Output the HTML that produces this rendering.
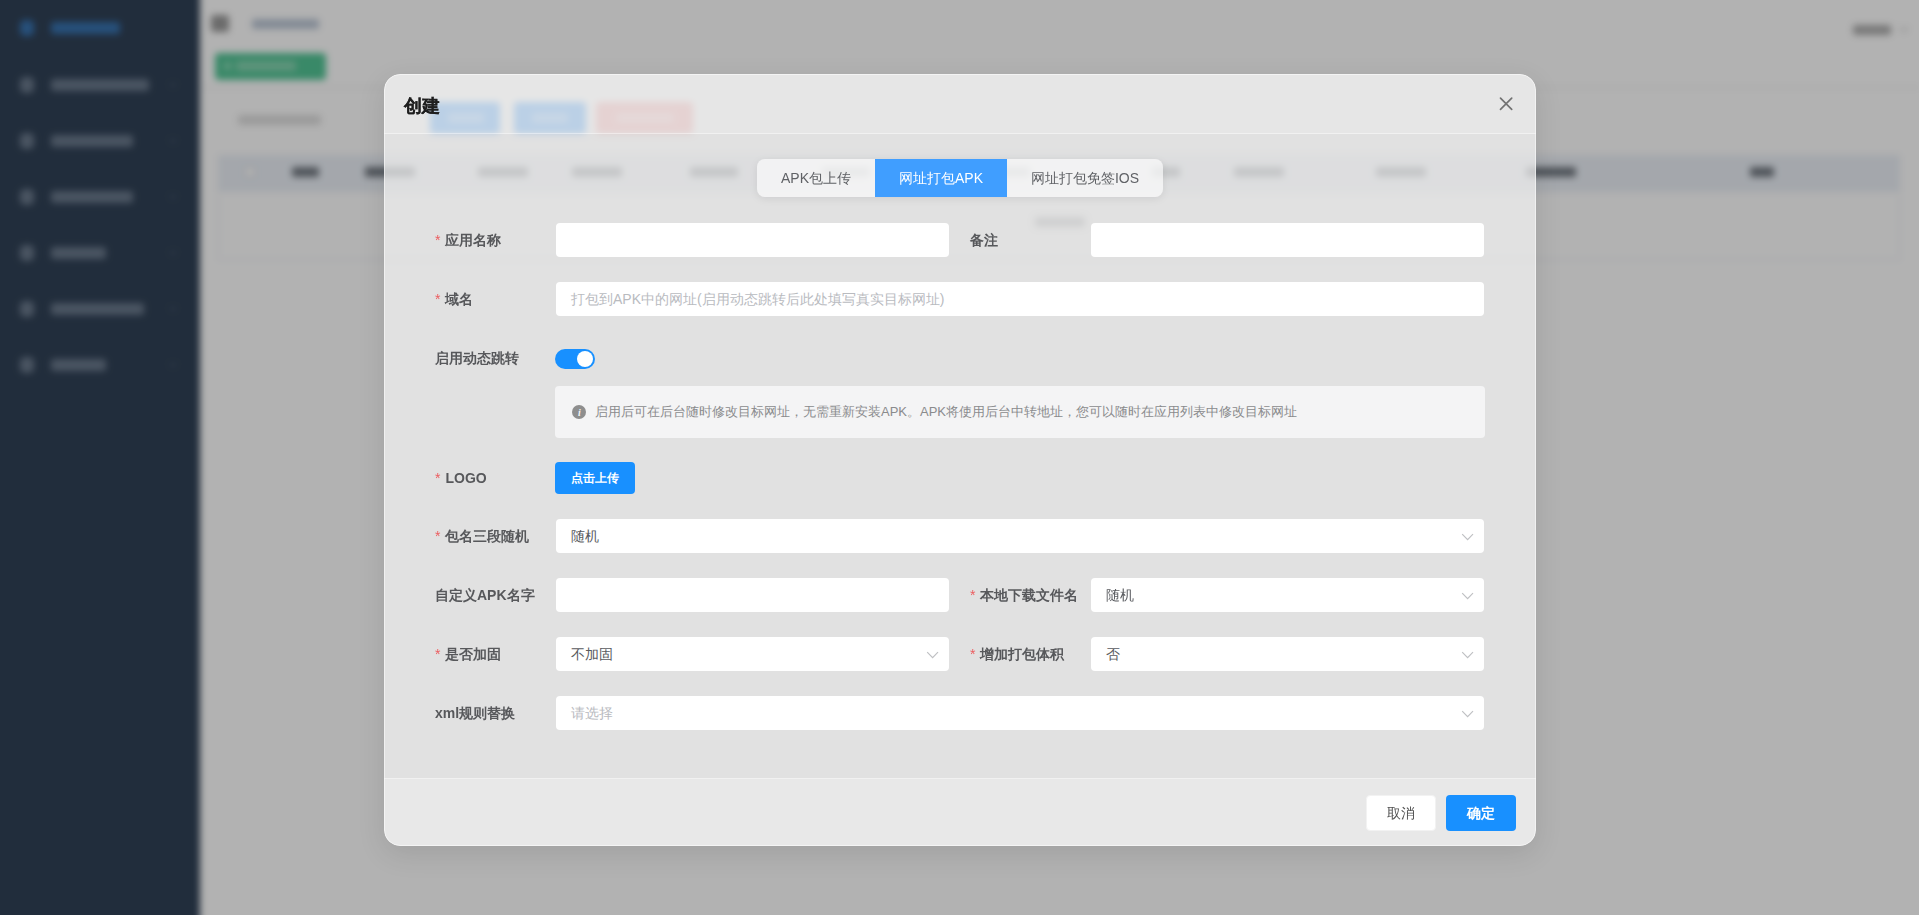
<!DOCTYPE html>
<html><head><meta charset="utf-8">
<style>
*{box-sizing:border-box;margin:0;padding:0}
html,body{width:1919px;height:915px;overflow:hidden;font-family:"Liberation Sans",sans-serif;background:#fff}
.abs{position:absolute}
#bg{position:absolute;left:-30px;top:-30px;width:1979px;height:975px;filter:blur(3.5px);background:#fff}
#bgi{position:absolute;left:30px;top:30px;width:1919px;height:915px}
#side{position:absolute;left:0;top:0;width:200px;height:915px;background:#304156}
#sidefill{position:absolute;left:0;top:0;width:230px;height:975px;background:#304156}
.si{position:absolute;left:20px;width:14px;height:14px;border-radius:3px}
.st{position:absolute;left:52px;font-size:14px;line-height:20px;white-space:nowrap}
#main{position:absolute;left:200px;top:0;width:1719px;height:915px;background:#fff}
#mask{position:absolute;left:0;top:0;width:1919px;height:915px;background:rgba(0,0,0,.3)}
#modal{position:absolute;left:384px;top:74px;width:1152px;height:772px;border-radius:16px;overflow:hidden;box-shadow:0 8px 28px rgba(0,0,0,.1)}
#hd{position:absolute;left:0;top:0;width:1152px;height:60px;background:rgba(255,255,255,.68);border-bottom:1px solid rgba(255,255,255,.42);backdrop-filter:brightness(1.0001)}
#bd{position:absolute;left:0;top:60px;width:1152px;height:644px;background:rgba(243,243,243,.72);backdrop-filter:brightness(1.0001)}
#ft{position:absolute;left:0;top:704px;width:1152px;height:68px;background:rgba(255,255,255,.7);border-top:1px solid rgba(255,255,255,.4);backdrop-filter:brightness(1.0001)}
#title{position:absolute;left:20px;top:21px;font-size:18px;font-weight:bold;-webkit-text-stroke:.1px #1f1f1f;color:#1f1f1f;line-height:22px}
.lbl{position:absolute;font-size:14px;font-weight:bold;color:#57585b;line-height:34px;white-space:nowrap}
.lbl i{font-style:normal;color:#ec5b5e;margin-right:5px;font-weight:normal}
.inp{position:absolute;height:34px;background:#fff;border-radius:4px;font-size:14px;color:#585a5e;line-height:34px;padding-left:15px;white-space:nowrap}
.ph{color:#b9bbbf}
.arr{position:absolute;right:10px;top:14px;width:13px;height:8px}
.btn{position:absolute;border-radius:4px;text-align:center;white-space:nowrap}
</style></head><body>
<div id="bg"><div id="sidefill"></div><div id="bgi">
  <div id="side"><div class="abs" style="left:20px;top:20px;width:14px;height:16px;border-radius:5px;background:#409eff;opacity:0.55"></div><div class="abs" style="left:51px;top:22px;width:69px;height:12px;border-radius:3px;background:#409eff;opacity:0.55"></div><div class="abs" style="left:20px;top:77px;width:14px;height:16px;border-radius:5px;background:#bfcbd9;opacity:0.42"></div><div class="abs" style="left:51px;top:79px;width:98px;height:12px;border-radius:3px;background:#bfcbd9;opacity:0.42"></div><div class="abs" style="left:170px;top:80px;width:6px;height:6px;border-right:1px solid #8a97a8;border-bottom:1px solid #8a97a8;transform:rotate(45deg);opacity:.4"></div><div class="abs" style="left:20px;top:133px;width:14px;height:16px;border-radius:5px;background:#bfcbd9;opacity:0.42"></div><div class="abs" style="left:51px;top:135px;width:82px;height:12px;border-radius:3px;background:#bfcbd9;opacity:0.42"></div><div class="abs" style="left:170px;top:136px;width:6px;height:6px;border-right:1px solid #8a97a8;border-bottom:1px solid #8a97a8;transform:rotate(45deg);opacity:.4"></div><div class="abs" style="left:20px;top:189px;width:14px;height:16px;border-radius:5px;background:#bfcbd9;opacity:0.42"></div><div class="abs" style="left:51px;top:191px;width:82px;height:12px;border-radius:3px;background:#bfcbd9;opacity:0.42"></div><div class="abs" style="left:170px;top:192px;width:6px;height:6px;border-right:1px solid #8a97a8;border-bottom:1px solid #8a97a8;transform:rotate(45deg);opacity:.4"></div><div class="abs" style="left:20px;top:245px;width:14px;height:16px;border-radius:5px;background:#bfcbd9;opacity:0.42"></div><div class="abs" style="left:51px;top:247px;width:55px;height:12px;border-radius:3px;background:#bfcbd9;opacity:0.42"></div><div class="abs" style="left:170px;top:248px;width:6px;height:6px;border-right:1px solid #8a97a8;border-bottom:1px solid #8a97a8;transform:rotate(45deg);opacity:.4"></div><div class="abs" style="left:20px;top:301px;width:14px;height:16px;border-radius:5px;background:#bfcbd9;opacity:0.42"></div><div class="abs" style="left:51px;top:303px;width:93px;height:12px;border-radius:3px;background:#bfcbd9;opacity:0.42"></div><div class="abs" style="left:170px;top:304px;width:6px;height:6px;border-right:1px solid #8a97a8;border-bottom:1px solid #8a97a8;transform:rotate(45deg);opacity:.4"></div><div class="abs" style="left:20px;top:357px;width:14px;height:16px;border-radius:5px;background:#bfcbd9;opacity:0.42"></div><div class="abs" style="left:51px;top:359px;width:55px;height:12px;border-radius:3px;background:#bfcbd9;opacity:0.42"></div><div class="abs" style="left:170px;top:360px;width:6px;height:6px;border-right:1px solid #8a97a8;border-bottom:1px solid #8a97a8;transform:rotate(45deg);opacity:.4"></div></div>
  <div id="main">
  <div class="abs" style="left:11px;top:15px;width:18px;height:17px;background:#9a9a9a;border-radius:3px"></div>
  <div class="abs" style="left:52px;top:19px;width:67px;height:10px;background:#97a8be;border-radius:2px;opacity:.65"></div>
  <div class="abs" style="left:1653px;top:25px;width:38px;height:10px;background:#6a6a6a;border-radius:2px;opacity:.55"></div>
  <div class="abs" style="left:1701px;top:25px;width:6px;height:6px;border-right:1px solid #aaa;border-bottom:1px solid #aaa;transform:rotate(45deg)"></div>
  <div class="abs" style="left:15px;top:53px;width:111px;height:27px;background:#52c495;border-radius:4px"></div>
  <div class="abs" style="left:24px;top:62px;width:7px;height:8px;background:#c0ebd4;border-radius:3px;opacity:.6"></div>
  <div class="abs" style="left:36px;top:61px;width:60px;height:10px;background:#b5e4cb;border-radius:2px;opacity:.55"></div>
  <div class="abs" style="left:0;top:87px;width:1719px;height:1px;background:#e8e8e8"></div>
  <div class="abs" style="left:38px;top:115px;width:83px;height:10px;background:#dedede;border-radius:2px"></div>
  <div class="abs" style="left:230px;top:102px;width:70px;height:32px;background:#409eff;border-radius:4px"></div>
  <div class="abs" style="left:314px;top:102px;width:72px;height:32px;background:#409eff;border-radius:4px"></div>
  <div class="abs" style="left:396px;top:102px;width:97px;height:32px;background:#f9a7a7;border-radius:4px"></div>
  <div class="abs" style="left:248px;top:113px;width:36px;height:10px;background:#b3d8ff;border-radius:2px;opacity:.5"></div>
  <div class="abs" style="left:332px;top:113px;width:36px;height:10px;background:#b3d8ff;border-radius:2px;opacity:.5"></div>
  <div class="abs" style="left:416px;top:113px;width:58px;height:10px;background:#fde2e2;border-radius:2px;opacity:.5"></div>
  <div class="abs" style="left:18px;top:155px;width:1682px;height:37px;background:#ebf0f7"></div>
  <div class="abs" style="left:18px;top:192px;width:1682px;height:68px;border:1px solid #ebeef5;border-top:none;background:#fff"></div>
  <div class="abs" style="left:835px;top:217px;width:50px;height:10px;background:#909399;border-radius:2px;opacity:.8"></div>
<div class="abs" style="left:92px;top:167px;width:27px;height:10px;background:#5d646c;border-radius:2px;opacity:.85"></div><div class="abs" style="left:165px;top:167px;width:50px;height:10px;background:#5d646c;border-radius:2px;opacity:.85"></div><div class="abs" style="left:278px;top:167px;width:50px;height:10px;background:#5d646c;border-radius:2px;opacity:.85"></div><div class="abs" style="left:372px;top:167px;width:50px;height:10px;background:#5d646c;border-radius:2px;opacity:.85"></div><div class="abs" style="left:490px;top:167px;width:48px;height:10px;background:#5d646c;border-radius:2px;opacity:.85"></div><div class="abs" style="left:622px;top:167px;width:48px;height:10px;background:#5d646c;border-radius:2px;opacity:.85"></div><div class="abs" style="left:780px;top:167px;width:50px;height:10px;background:#5d646c;border-radius:2px;opacity:.85"></div><div class="abs" style="left:952px;top:167px;width:28px;height:10px;background:#5d646c;border-radius:2px;opacity:.85"></div><div class="abs" style="left:1034px;top:167px;width:50px;height:10px;background:#5d646c;border-radius:2px;opacity:.85"></div><div class="abs" style="left:1176px;top:167px;width:50px;height:10px;background:#5d646c;border-radius:2px;opacity:.85"></div><div class="abs" style="left:1326px;top:167px;width:50px;height:10px;background:#5d646c;border-radius:2px;opacity:.85"></div><div class="abs" style="left:1550px;top:167px;width:24px;height:10px;background:#5d646c;border-radius:2px;opacity:.85"></div><div class="abs" style="left:44px;top:166px;width:12px;height:12px;border:1px solid #c5cbd3;border-radius:2px;background:#fff"></div></div>
</div></div>
<div id="mask"></div>
<div id="modal">
  <div id="bd"></div>
  <div id="hd"><div id="title">创建</div>
    <svg class="abs" style="left:1114px;top:22px" width="16" height="16" viewBox="0 0 16 16"><path d="M2.5 2.2L13.7 13.4M13.7 2.2L2.5 13.4" stroke="#727272" stroke-width="1.7" stroke-linecap="round" fill="none"/></svg>
  </div>
  <div id="ft">
    <div class="btn" style="left:982px;top:16px;width:70px;height:36px;background:#fff;border:1px solid #f2f2f2;font-size:14px;line-height:34px;color:#505050">取消</div>
    <div class="btn" style="left:1062px;top:16px;width:70px;height:36px;background:#1890ff;font-size:14px;line-height:36px;color:#fff;font-weight:bold">确定</div>
  </div>
  <div class="abs" style="left:0;top:0;width:1152px;height:772px;border-radius:16px;border:1px solid rgba(255,255,255,.5);pointer-events:none"></div>
</div>

<div id="form">
  <div class="abs" id="tabs" style="left:757px;top:159px;width:406px;height:38px;border-radius:8px;background:rgba(255,255,255,.62);box-shadow:0 2px 8px rgba(0,0,0,.08);overflow:hidden;font-size:14px;color:#606266;line-height:38px">
    <div class="abs" style="left:0;top:0;width:118px;height:38px;text-align:center">APK包上传</div>
    <div class="abs" style="left:118px;top:0;width:132px;height:38px;text-align:center;background:#409eff;color:#fff">网址打包APK</div>
    <div class="abs" style="left:250px;top:0;width:156px;height:38px;text-align:center">网址打包免签IOS</div>
  </div>

  <div class="lbl" style="left:435px;top:223px"><i>*</i>应用名称</div>
  <div class="inp" style="left:556px;top:223px;width:393px"></div>
  <div class="lbl" style="left:970px;top:223px">备注</div>
  <div class="inp" style="left:1091px;top:223px;width:393px"></div>

  <div class="lbl" style="left:435px;top:282px"><i>*</i>域名</div>
  <div class="inp ph" style="left:556px;top:282px;width:928px">打包到APK中的网址(启用动态跳转后此处填写真实目标网址)</div>

  <div class="lbl" style="left:435px;top:341px">启用动态跳转</div>
  <div class="abs" style="left:555px;top:349px;width:40px;height:20px;border-radius:10px;background:#1890ff"></div>
  <div class="abs" style="left:577px;top:351px;width:16px;height:16px;border-radius:8px;background:#fff"></div>

  <div class="abs" style="left:555px;top:386px;width:930px;height:52px;border-radius:4px;background:#f4f4f5;font-size:13px;color:#8a8b8d;line-height:52px;padding-left:40px;white-space:nowrap">
    <svg class="abs" style="left:17px;top:19px" width="14" height="14" viewBox="0 0 14 14"><circle cx="7" cy="7" r="7" fill="#8e8e8e"/><text x="7.3" y="11" font-size="10" font-style="italic" font-weight="bold" fill="#f4f4f5" text-anchor="middle" font-family="Liberation Serif">i</text></svg>
    启用后可在后台随时修改目标网址，无需重新安装APK。APK将使用后台中转地址，您可以随时在应用列表中修改目标网址
  </div>

  <div class="lbl" style="left:435px;top:461px"><i>*</i>LOGO</div>
  <div class="btn" style="left:555px;top:462px;width:80px;height:32px;background:#1890ff;color:#fff;font-size:12px;font-weight:bold;line-height:32px">点击上传</div>

  <div class="lbl" style="left:435px;top:519px"><i>*</i>包名三段随机</div>
  <div class="inp" style="left:556px;top:519px;width:928px">随机<svg class="arr" viewBox="0 0 13 8"><path d="M1.2 1.2L6.6 6.6L12 1.2" stroke="#bfc0c3" stroke-width="1.2" fill="none"/></svg></div>

  <div class="lbl" style="left:435px;top:578px">自定义APK名字</div>
  <div class="inp" style="left:556px;top:578px;width:393px"></div>
  <div class="lbl" style="left:970px;top:578px"><i>*</i>本地下载文件名</div>
  <div class="inp" style="left:1091px;top:578px;width:393px">随机<svg class="arr" viewBox="0 0 13 8"><path d="M1.2 1.2L6.6 6.6L12 1.2" stroke="#bfc0c3" stroke-width="1.2" fill="none"/></svg></div>

  <div class="lbl" style="left:435px;top:637px"><i>*</i>是否加固</div>
  <div class="inp" style="left:556px;top:637px;width:393px">不加固<svg class="arr" viewBox="0 0 13 8"><path d="M1.2 1.2L6.6 6.6L12 1.2" stroke="#bfc0c3" stroke-width="1.2" fill="none"/></svg></div>
  <div class="lbl" style="left:970px;top:637px"><i>*</i>增加打包体积</div>
  <div class="inp" style="left:1091px;top:637px;width:393px">否<svg class="arr" viewBox="0 0 13 8"><path d="M1.2 1.2L6.6 6.6L12 1.2" stroke="#bfc0c3" stroke-width="1.2" fill="none"/></svg></div>

  <div class="lbl" style="left:435px;top:696px">xml规则替换</div>
  <div class="inp ph" style="left:556px;top:696px;width:928px">请选择<svg class="arr" viewBox="0 0 13 8"><path d="M1.2 1.2L6.6 6.6L12 1.2" stroke="#bfc0c3" stroke-width="1.2" fill="none"/></svg></div>
</div>
</body></html>
